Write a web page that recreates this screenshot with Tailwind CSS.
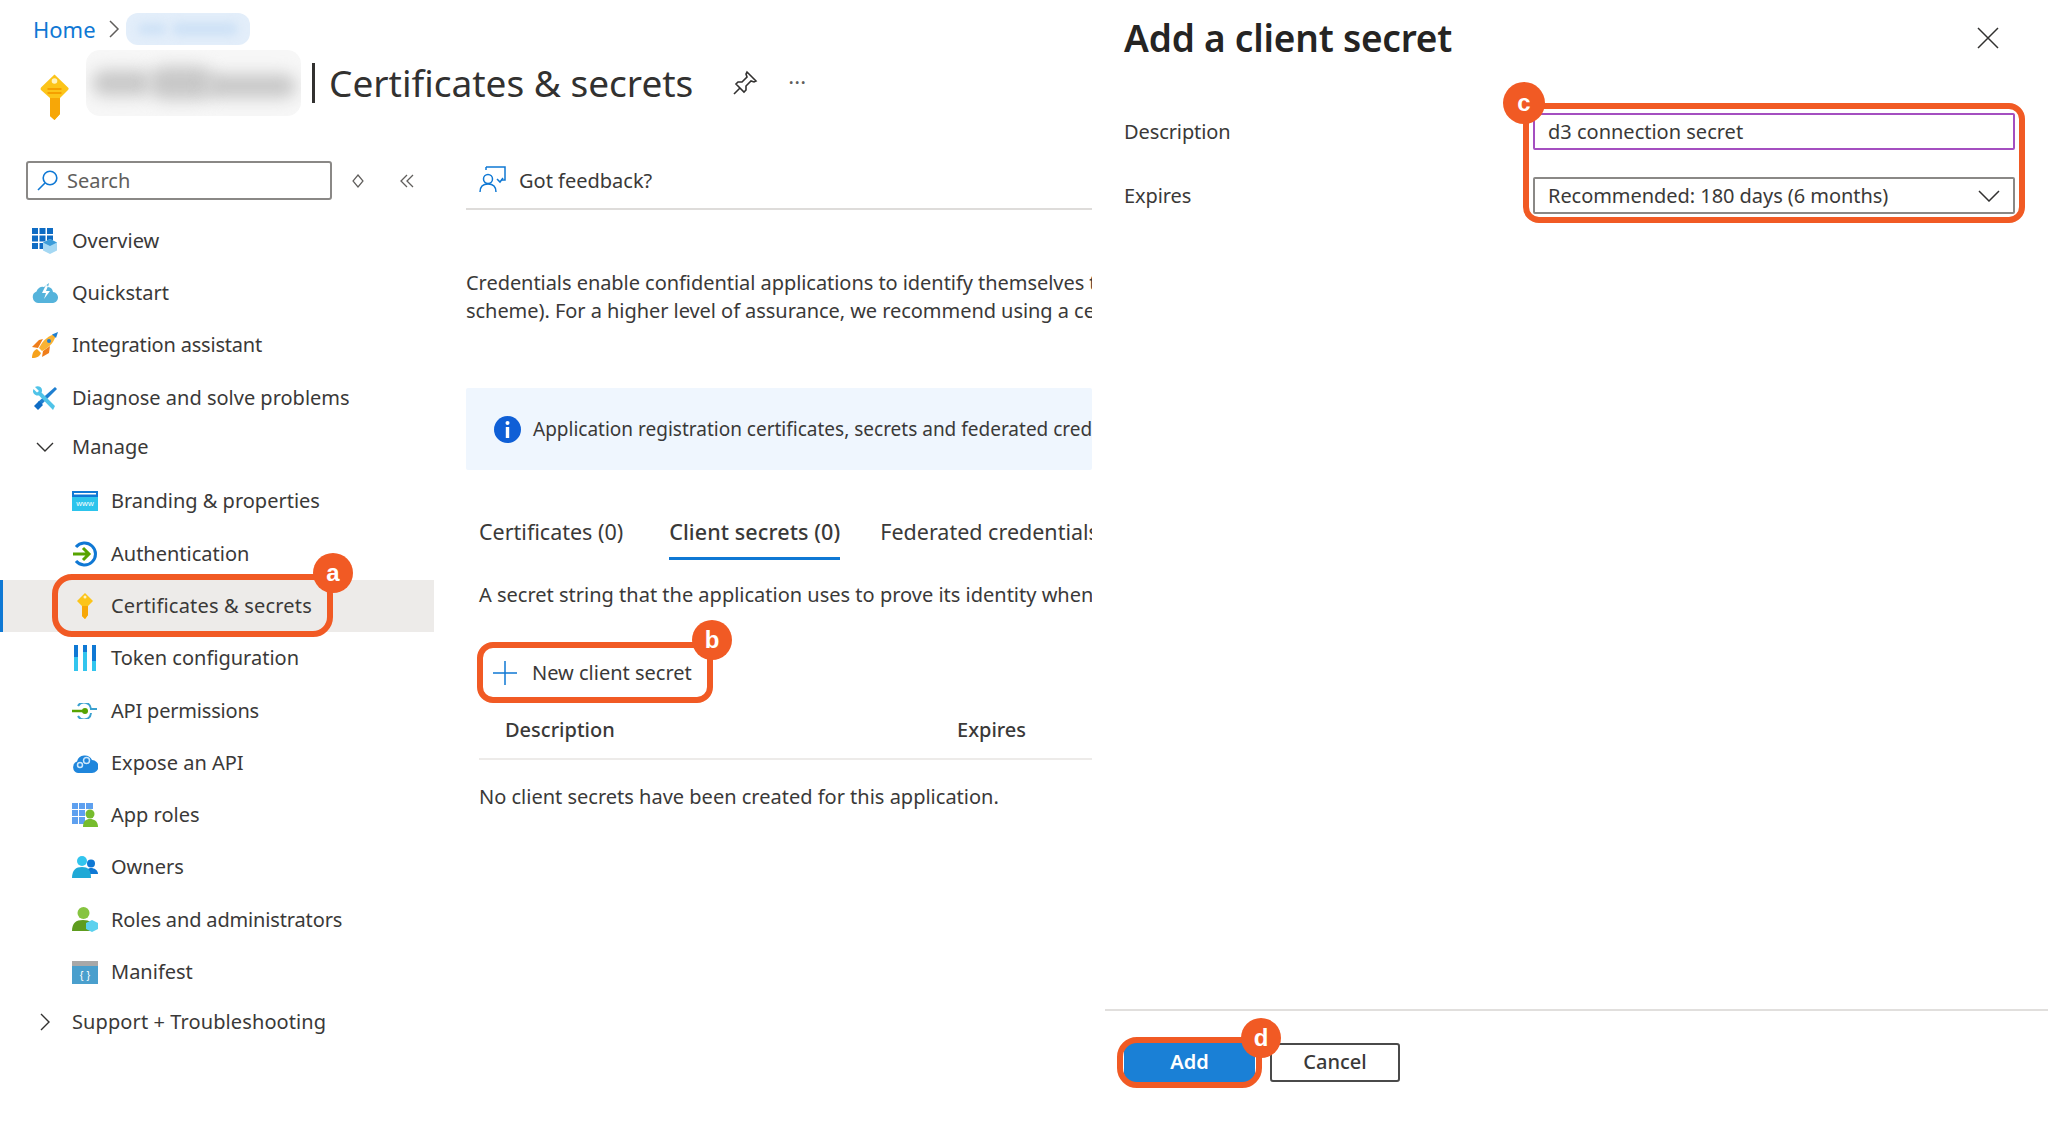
<!DOCTYPE html>
<html lang="en">
<head>
<meta charset="UTF-8">
<title>Certificates &amp; secrets</title>
<script src="https://cdn.jsdelivr.net/npm/@tailwindcss/browser@4"></script>
</head>
<body class="bg-white">
<div class="relative flex w-[2048px] h-[1121px] overflow-hidden bg-white text-[#3a3938] text-[20px] font-['Noto_Sans','Open_Sans',sans-serif]">

  <!-- left blade -->
  <div class="w-[1105px] shrink-0 flex flex-col">
    <header class="h-[161px] shrink-0">
      <div class="h-[58px] flex items-center pl-[33px]">
        <span class="text-[#0f78d4] text-[22px]">Home</span>
        <svg class="ml-[13px]" width="11" height="18" viewBox="0 0 11 18" fill="none" stroke="#605e5c" stroke-width="1.5"><path d="M1 1l8 8-8 8"/></svg>
        <div class="relative ml-[6px] w-[124px] h-[32px] rounded-[12px] bg-[#e3eefa] overflow-hidden">
          <div class="absolute left-[12px] top-[10px] w-[28px] h-[12px] bg-[#cfe2f6] blur-[4px] rounded-full"></div>
          <div class="absolute left-[46px] top-[9px] w-[66px] h-[14px] bg-[#cfe2f6] blur-[4px] rounded-full"></div>
        </div>
      </div>
      <div class="h-[50px] flex items-center pl-[40px]">
        <svg width="29" height="46" viewBox="0 0 29 46" class="mt-[28px] shrink-0">
          <path d="M14.5 0.5 L28.5 14 Q29 15 28 16 L20 24 V29 L18.500 31 L20 33 L18.500 35 L20 37 V40 L14.500 46 L10 42 V24 L1 16 Q0 15 1 13.500 Z" fill="#fcc419"/>
          <path d="M14.500 24 H20 V40 L14.500 46 L10 42 V24 Z" fill="#f7a707"/>
          <circle cx="14.500" cy="7" r="2.800" fill="#fff3bf"/>
          <rect x="7.500" y="14" width="14" height="2" fill="#f59f00"/>
          <rect x="7.500" y="18" width="14" height="2" fill="#f59f00"/>
        </svg>
        <div class="relative ml-[17px] w-[215px] h-[66px] rounded-[14px] bg-[#f7f7f7] overflow-hidden shrink-0">
          <div class="absolute left-[6px] top-[20px] w-[60px] h-[26px] bg-[#c8c8c8] blur-[8px] rounded-full"></div>
          <div class="absolute left-[62px] top-[16px] w-[66px] h-[34px] bg-[#c8c8c8] blur-[8px] rounded-full"></div>
          <div class="absolute left-[118px] top-[24px] w-[92px] h-[24px] bg-[#c8c8c8] blur-[8px] rounded-full"></div>
        </div>
        <div class="ml-[11px] w-[3px] h-[40px] bg-[#323130] shrink-0"></div>
        <h1 class="ml-[14px] text-[37px] leading-[50px] whitespace-nowrap text-[#323130]">Certificates &amp; secrets</h1>
        <svg class="ml-[39px] shrink-0" width="26" height="26" viewBox="0 0 26 26" fill="none" stroke="#323130" stroke-width="1.6"><path d="M15 2l9 9-2 1-3-1-5 5 0 4-2 2-8-8 2-2 4 0 5-5-1-3z"/><path d="M8 18l-6 6"/></svg>
        <span class="ml-[30px] mb-[4px] text-[22px] leading-none text-[#605e5c]">···</span>
      </div>
    </header>

    <div class="flex flex-1 min-h-0">
      <!-- resource menu -->
      <nav class="w-[434px] shrink-0">
        <div class="h-[39px] flex items-center pl-[26px]">
          <div class="w-[306px] h-[39px] border-2 border-[#8a8886] rounded-[3px] flex items-center pl-[9px] text-[#605e5c]">
            <svg width="21" height="21" viewBox="0 0 21 21" fill="none" stroke="#0f78d4" stroke-width="1.6"><circle cx="13" cy="8" r="6.8"/><path d="M8 13l-7 7"/></svg>
            <span class="ml-[9px]">Search</span>
          </div>
          <svg class="ml-[20px]" width="12" height="14" viewBox="0 0 12 14" fill="none" stroke="#605e5c" stroke-width="1.2"><path d="M6 1l5 6-5 6-5-6z"/></svg>
          <svg class="ml-[36px]" width="14" height="14" viewBox="0 0 14 14" fill="none" stroke="#605e5c" stroke-width="1.3"><path d="M7 1L1 7l6 6M13 1L7 7l6 6"/></svg>
        </div>

        <ul class="mt-[14.5px]">
          <li class="h-[52.3px] flex items-center pl-[32px] gap-[14px]">
            <svg width="26" height="26" viewBox="0 0 26 26" class="shrink-0"><g fill="#0f6cc4"><rect width="6" height="6"/><rect x="7.500" width="6" height="6"/><rect x="15" width="6" height="6"/><rect y="7.500" width="6" height="6"/><rect x="7.500" y="7.500" width="6" height="6"/><rect x="15" y="7.500" width="6" height="6"/><rect y="15" width="6" height="6"/><rect x="7.500" y="15" width="6" height="6"/></g><path d="M18 11l7 3.500v8L18 26l-7-3.500v-8z" fill="#a5d8f3"/><path d="M18 11l7 3.500-7 3.500-7-3.500z" fill="#3b9cd9"/></svg>
            <span>Overview</span>
          </li>
          <li class="h-[52.3px] flex items-center pl-[32px] gap-[14px]">
            <svg width="26" height="20" viewBox="0 0 26 20" class="shrink-0"><path d="M6 20a6 6 0 0 1-1.500-11.500A6 6 0 0 1 12 4l5-4-1 4a6 6 0 0 1 5 5 5.500 5.500 0 0 1-1 11z" fill="#55b3db"/><path d="M14 2l-4 8h4l-2 6 6-8h-4l2-5z" fill="#fff"/></svg>
            <span>Quickstart</span>
          </li>
          <li class="h-[52.3px] flex items-center pl-[32px] gap-[14px]">
            <svg width="26" height="26" viewBox="0 0 26 26" class="shrink-0"><path d="M7 8l4-1-5 9-6-1z" fill="#ef7d1a"/><path d="M11 19l7-5-1 7-7 4z" fill="#ef7d1a"/><path d="M0 26c0-5 2-8 5-9l4 4c-1 3-4 5-9 5z" fill="#f6a21c"/><path d="M7 16C11 8 17 3 24 2c-1 7-6 13-14 17z" fill="#f9b233"/><path d="M20 2.500L26 0l-2 6z" fill="#1f7fd0"/><circle cx="17" cy="9" r="2" fill="#1f7fd0"/></svg>
            <span class="tracking-[-0.2px]">Integration assistant</span>
          </li>
          <li class="h-[52.3px] flex items-center pl-[33px] gap-[15px]">
            <svg width="24" height="24" viewBox="0 0 24 24" class="shrink-0"><path d="M22 1l2 2-16 16-3-3z" fill="#1f7fd0"/><path d="M1 20l5-5 4 4-5 5z" fill="#0f6cc4"/><path d="M2 1c3-2 7 0 7 3 0 1 0 2-.5 2.500L22 20l-2 4L6 9.500C4 10 1 9 0 6c0-1 0-2 .5-3L4 6.500 6 5z" fill="#4fc3e8"/></svg>
            <span>Diagnose and solve problems</span>
          </li>
          <li class="h-[46px] flex items-center pl-[36px] gap-[18px]">
            <svg width="18" height="10" viewBox="0 0 18 10" fill="none" stroke="#323130" stroke-width="1.4" class="shrink-0"><path d="M1 1l8 8 8-8"/></svg>
            <span>Manage</span>
          </li>
        </ul>

        <ul class="mt-[5.5px]">
          <li class="h-[52.3px] flex items-center pl-[72px] gap-[13px]">
            <svg width="26" height="20" viewBox="0 0 26 20" class="shrink-0"><rect width="26" height="20" fill="#2cc4ec"/><rect width="26" height="6" fill="#0f78d4"/><rect x="2" y="2" width="22" height="1.500" fill="#fff"/><text x="13" y="15" font-size="8" fill="#fff" text-anchor="middle" font-family="Liberation Sans">www</text></svg>
            <span>Branding &amp; properties</span>
          </li>
          <li class="h-[52.3px] flex items-center pl-[72px] gap-[13px]">
            <svg width="26" height="26" viewBox="0 0 26 26" class="shrink-0"><path d="M4 6a11 11 0 1 1 0 14" fill="none" stroke="#0f78d4" stroke-width="3"/><path d="M1 13h15M11 7l6 6-6 6" fill="none" stroke="#57a300" stroke-width="3"/></svg>
            <span>Authentication</span>
          </li>
          <li class="h-[52.3px] flex items-center pl-[72px] gap-[13px] bg-[#edebe9] relative">
            <span class="absolute left-0 top-0 bottom-0 w-[3px] bg-[#0f78d4]"></span>
            <svg width="26" height="26" viewBox="0 0 26 26" class="shrink-0"><path d="M13 0l8 8-5 5v9l-3 4-3-3V13L5 8z" fill="#fcc419"/><path d="M13 13h3v9l-3 4-3-3V13z" fill="#f7a707"/><circle cx="13" cy="4" r="1.500" fill="#fff3bf"/></svg>
            <span class="tracking-[0.18px]">Certificates &amp; secrets</span>
          </li>
          <li class="h-[52.3px] flex items-center pl-[72px] gap-[13px]">
            <svg width="26" height="26" viewBox="0 0 26 26" class="shrink-0"><rect x="2" width="4" height="26" fill="#32c5ee"/><rect x="2" width="4" height="12" fill="#0f78d4"/><rect x="11" width="4" height="26" fill="#32c5ee"/><rect x="11" width="4" height="7" fill="#0f78d4"/><rect x="20" width="4" height="26" fill="#32c5ee"/><rect x="20" width="4" height="16" fill="#0f78d4"/></svg>
            <span>Token configuration</span>
          </li>
          <li class="h-[52.3px] flex items-center pl-[72px] gap-[13px]">
            <svg width="26" height="16" viewBox="0 0 26 16" class="shrink-0"><path d="M6 3a7 7 0 0 1 13 3h6M19 10a7 7 0 0 1-13 3" fill="none" stroke="#3ba1cf" stroke-width="2"/><path d="M0 8h13" stroke="#57a300" stroke-width="2.500"/><circle cx="13" cy="8" r="3" fill="#57a300"/></svg>
            <span class="tracking-[-0.2px]">API permissions</span>
          </li>
          <li class="h-[52.3px] flex items-center pl-[72px] gap-[13px]">
            <svg width="26" height="20" viewBox="0 0 26 20" class="shrink-0"><path d="M6 20a6 6 0 0 1-1-11.500A8 8 0 0 1 20 7a6.500 6.500 0 0 1 0 13z" fill="#1f86dc"/><circle cx="8" cy="12" r="2.500" fill="none" stroke="#cfe8fb" stroke-width="1.500"/><circle cx="14.500" cy="7.500" r="3" fill="none" stroke="#cfe8fb" stroke-width="1.500"/></svg>
            <span>Expose an API</span>
          </li>
          <li class="h-[52.3px] flex items-center pl-[72px] gap-[13px]">
            <svg width="26" height="24" viewBox="0 0 26 24" class="shrink-0"><g fill="#5ea0ef"><rect width="6" height="6"/><rect x="7" width="6" height="6"/><rect x="14" width="7" height="6"/><rect y="7" width="6" height="6"/><rect x="7" y="7" width="6" height="6"/><rect y="14" width="6" height="7"/><rect x="7" y="14" width="6" height="7"/></g><circle cx="18" cy="11" r="4.500" fill="#76bc2d"/><path d="M11 24c0-6 3-8 7-8s8 2 8 8z" fill="#76bc2d"/></svg>
            <span>App roles</span>
          </li>
          <li class="h-[52.3px] flex items-center pl-[72px] gap-[13px]">
            <svg width="26" height="22" viewBox="0 0 26 22" class="shrink-0"><circle cx="19" cy="7.500" r="4" fill="#0f78d4"/><path d="M14 18c0-4 2-6 5-6s7 2 7 6z" fill="#0f78d4"/><circle cx="10" cy="5" r="5" fill="#32c5ee"/><path d="M0 22c0-8 4-11 10-11s9 3 9 11z" fill="#1fa9d6"/></svg>
            <span>Owners</span>
          </li>
          <li class="h-[52.3px] flex items-center pl-[72px] gap-[13px]">
            <svg width="26" height="25" viewBox="0 0 26 25" class="shrink-0"><circle cx="11.500" cy="6" r="6" fill="#86c440"/><path d="M0 24c0-8 4-11 11-11s10 3 10 11z" fill="#5e9c1e"/><path d="M20 13l6 3v6l-6 3-6-3v-6z" fill="#5cd1ee"/></svg>
            <span class="tracking-[-0.15px]">Roles and administrators</span>
          </li>
          <li class="h-[52.3px] flex items-center pl-[72px] gap-[13px]">
            <svg width="26" height="23" viewBox="0 0 26 23" class="shrink-0"><rect width="26" height="23" fill="#4a9fcd"/><rect width="26" height="5" fill="#a8a8a8"/><text x="13" y="18" font-size="11" fill="#fff" text-anchor="middle" font-family="Liberation Sans">{ }</text></svg>
            <span>Manifest</span>
          </li>
          <li class="h-[47px] flex items-center pl-[40px] gap-[22px]">
            <svg width="10" height="18" viewBox="0 0 10 18" fill="none" stroke="#323130" stroke-width="1.400" class="shrink-0"><path d="M1 1l8 8-8 8"/></svg>
            <span class="tracking-[0.1px]">Support + Troubleshooting</span>
          </li>
        </ul>
      </nav>

      <!-- blade content -->
      <main class="ml-[32px] w-[626px] overflow-hidden whitespace-nowrap">
        <div class="h-[49px] border-b-2 border-[#dedcda] flex items-start pl-[13px] pt-[6px] gap-[13px]">
          <svg width="27" height="27" viewBox="0 0 27 27" fill="none" stroke="#0f78d4" stroke-width="1.500" class="shrink-0 -mt-[1px]"><path d="M7 1h19v13h-4"/><path d="M7 1v3"/><circle cx="9" cy="13" r="4.500"/><path d="M1 26c0-6 3-8 8-8s8 2 8 8"/><path d="M18 13l3 3 3-4"/></svg>
          <span class="leading-[28px]">Got feedback?</span>
        </div>
        <p class="mt-[59px] leading-[28px] tracking-[-0.05px]">Credentials enable confidential applications to identify themselves to the authentication service<br>scheme). For a higher level of assurance, we recommend using a certificate (instead of a client secret)</p>
        <div class="mt-[63px] h-[82px] bg-[#eff6fe] rounded-[2px] flex items-center pl-[28px] gap-[12px]">
          <svg width="27" height="27" viewBox="0 0 27 27" class="shrink-0"><circle cx="13.500" cy="13.500" r="13.500" fill="#0f5fd6"/><circle cx="13.500" cy="7" r="2" fill="#fff"/><rect x="11.800" y="11" width="3.400" height="11" fill="#fff"/></svg>
          <span class="text-[19px]">Application registration certificates, secrets and federated credentials can be found in the tabs below.</span>
        </div>
        <div class="mt-[37px] h-[53px] flex pl-[13px]">
          <span class="leading-[50px] text-[21.5px]">Certificates (0)</span>
          <span class="ml-[46px] leading-[50px] text-[21.5px] font-medium h-[53px] border-b-[3px] border-[#0f78d4] tracking-[0.1px]">Client secrets (0)</span>
          <span class="ml-[40px] leading-[50px] text-[21.5px]">Federated credentials (0)</span>
        </div>
        <p class="mt-[21px] pl-[13px] leading-[28px]">A secret string that the application uses to prove its identity when requesting a token.</p>
        <div class="mt-[33px] h-[61px] flex items-center pl-[27px] gap-[15px]">
          <svg width="24" height="24" viewBox="0 0 24 24" stroke="#0f78d4" stroke-width="1.500" class="shrink-0"><path d="M12 0v24M0 12h24"/></svg>
          <span>New client secret</span>
        </div>
        <div class="ml-[13px] h-[57px] pb-[2px] border-b-2 border-[#edebe9] flex items-center pl-[26px] font-medium relative">
          <span>Description</span>
          <span class="absolute left-[478px]">Expires</span>
        </div>
        <p class="mt-[23px] pl-[13px] leading-[28px]">No client secrets have been created for this application.</p>
      </main>
    </div>
  </div>

  <!-- add a client secret panel -->
  <aside class="flex-1 flex flex-col">
    <div class="h-[75px] shrink-0 flex items-center justify-between pl-[19px] pr-[49px]">
      <h2 class="text-[37px] font-semibold leading-[50px] text-[#252423] tracking-[-0.2px]">Add a client secret</h2>
      <svg width="22" height="22" viewBox="0 0 22 22" stroke="#323130" stroke-width="1.500"><path d="M1 1l20 20M21 1L1 21"/></svg>
    </div>
    <div class="pl-[19px] pr-[33px] pt-[38px]">
      <div class="flex items-center h-[37px]">
        <label class="w-[409px] tracking-[-0.1px]">Description</label>
        <input type="text" value="d3 connection secret" readonly class="w-[482px] h-[37px] border-2 border-[#a44fc0] rounded-[2px] pl-[13px] outline-none">
      </div>
      <div class="flex items-center h-[37px] mt-[27px]">
        <label class="w-[409px] tracking-[-0.1px]">Expires</label>
        <div class="w-[482px] h-[37px] border-2 border-[#8a8886] rounded-[2px] pl-[13px] pr-[13px] flex items-center justify-between">
          <span class="tracking-[-0.05px]">Recommended: 180 days (6 months)</span>
          <svg width="22" height="12" viewBox="0 0 22 12" fill="none" stroke="#323130" stroke-width="1.500"><path d="M1 1l10 10L21 1"/></svg>
        </div>
      </div>
    </div>
    <div class="mt-auto h-[112px] border-t-2 border-[#e1dfdd] flex items-start pt-[32px] pl-[19px] gap-[15px]">
      <button class="w-[131px] h-[39px] pb-[2px] rounded-[8px] bg-[#1a80d6] text-white font-semibold">Add</button>
      <button class="w-[130px] h-[39px] pb-[2px] rounded-[3px] border-2 border-[#4a4a4a] bg-white font-medium">Cancel</button>
    </div>
  </aside>

  <!-- orange callouts over the screenshot -->
  <div class="absolute left-[52px] top-[574px] w-[281px] h-[63px] border-[6px] border-[#f15a24] rounded-[20px]"></div>
  <div class="absolute left-[313px] top-[553px] w-[40px] h-[40px] rounded-full bg-[#f15a24] text-white text-[24px] font-bold font-['Liberation_Sans',sans-serif] flex items-center justify-center">a</div>

  <div class="absolute left-[477px] top-[642px] w-[236px] h-[61px] border-[6px] border-[#f15a24] rounded-[16px]"></div>
  <div class="absolute left-[692px] top-[620px] w-[40px] h-[40px] rounded-full bg-[#f15a24] text-white text-[24px] font-bold font-['Liberation_Sans',sans-serif] flex items-center justify-center">b</div>

  <div class="absolute left-[1523px] top-[103px] w-[502px] h-[120px] border-[6px] border-[#f15a24] rounded-[16px]"></div>
  <div class="absolute left-[1503px] top-[82px] w-[42px] h-[42px] rounded-full bg-[#f15a24] text-white text-[24px] font-bold font-['Liberation_Sans',sans-serif] flex items-center justify-center">c</div>

  <div class="absolute left-[1117px] top-[1037px] w-[145px] h-[51px] border-[6px] border-[#f15a24] rounded-[20px]"></div>
  <div class="absolute left-[1241px] top-[1018px] w-[40px] h-[40px] rounded-full bg-[#f15a24] text-white text-[24px] font-bold font-['Liberation_Sans',sans-serif] flex items-center justify-center">d</div>
</div>
</body>
</html>
